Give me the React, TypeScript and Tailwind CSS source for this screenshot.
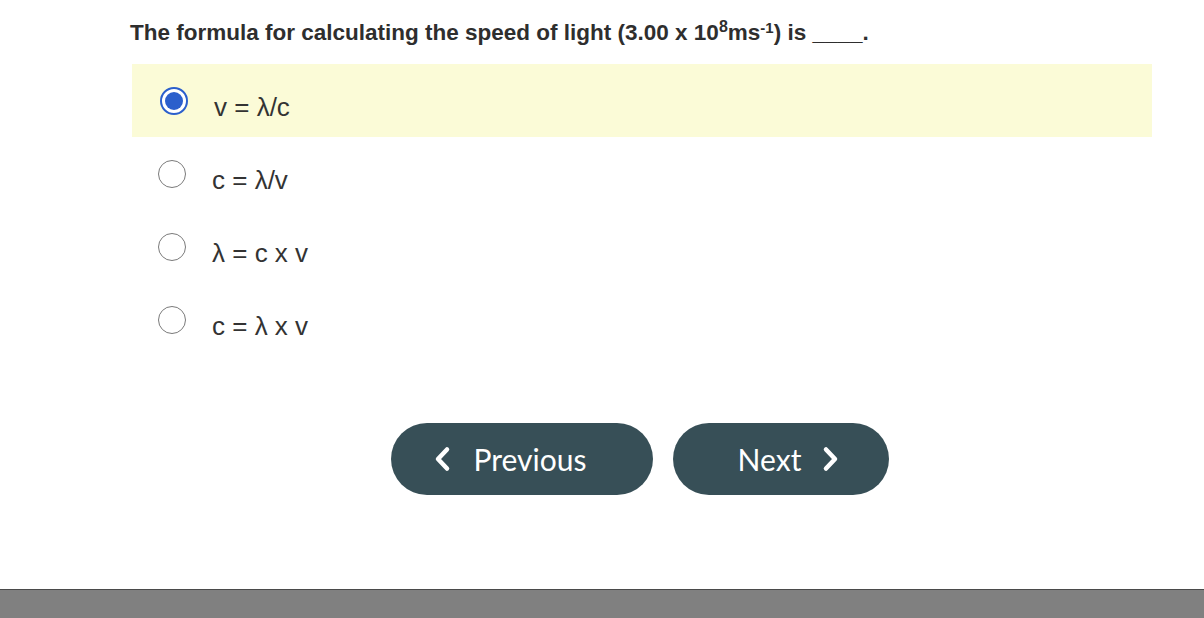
import React from 'react';

const options = ['v = λ/c', 'c = λ/v', 'λ = c x v', 'c = λ x v'];

function Radio({ checked }: { checked: boolean }) {
  if (checked) {
    return (
      <span className="flex h-[28px] w-[28px] items-center justify-center rounded-full border-[2px] border-[#2b5fcc] bg-white">
        <span className="h-[18px] w-[18px] rounded-full bg-[#2b5fcc]" />
      </span>
    );
  }
  return <span className="h-[28px] w-[28px] rounded-full border-[1.5px] border-[#7a7a7a] bg-white" />;
}

function Chevron({ dir }: { dir: 'left' | 'right' }) {
  return (
    <svg width="18" height="26" viewBox="0 0 18 26" fill="none">
      <path
        d={dir === 'left' ? 'M14 3.5 L5 13 L14 22.5' : 'M4 3.5 L13 13 L4 22.5'}
        stroke="white"
        strokeWidth="4.5"
        strokeLinecap="round"
        strokeLinejoin="round"
      />
    </svg>
  );
}

export default function App() {
  return (
    <div className="flex h-[618px] w-[1204px] flex-col bg-white font-['Liberation_Sans',Arial,sans-serif]">
      <div className="flex-1 pl-[130px] pr-[52px]">
        {/* question */}
        <h1 className="pt-[18px] text-[22.5px] font-bold leading-[30px] text-[#2e2e2e]">
          The formula for calculating the speed of light (3.00 x 10
          <sup className="text-[16px]">8</sup>ms<sup className="text-[15px]">-1</sup>) is ____.
        </h1>

        {/* answers */}
        <div className="mt-[16px] flex flex-col">
          {options.map((opt, i) => (
            <div
              key={opt}
              className={`flex h-[73px] items-center gap-[26px] pl-[28px] ${i === 0 ? 'ml-[2px] bg-[#fbfbd7]' : ''}`}
            >
              <Radio checked={i === 0} />
              <span className="pt-[12px] text-[26px] leading-[26px] text-[#333]">{opt}</span>
            </div>
          ))}
        </div>

        {/* nav */}
        <div className="mt-[67px] flex justify-start gap-[20px] pl-[261px]">
          <button className="flex h-[72px] w-[262px] items-center justify-center gap-[23px] rounded-full bg-[#374f57] pr-[25px] font-['Lato',sans-serif] text-[30px] text-white">
            <Chevron dir="left" />
            Previous
          </button>
          <button className="flex h-[72px] w-[216px] items-center justify-center gap-[21px] rounded-full bg-[#374f57] pl-[16px] font-['Lato',sans-serif] text-[30px] text-white">
            Next
            <Chevron dir="right" />
          </button>
        </div>
      </div>

      {/* footer bar */}
      <div className="h-[29px] border-t border-[#4a4a4a] bg-[#808080]" />
    </div>
  );
}
